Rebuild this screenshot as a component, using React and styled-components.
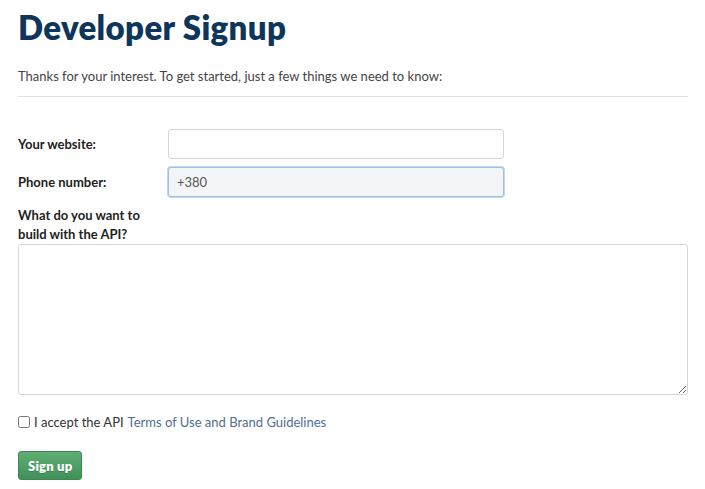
import React from "react";
import styled, { createGlobalStyle } from "styled-components";

const GlobalStyle = createGlobalStyle`
  body {
    margin: 0;
    background: #fff;
    font-family: "Lato", "Open Sans", sans-serif;
    color: #333;
  }
`;

const Page = styled.div`
  padding: 7px 17px 0 18px;
`;

const Title = styled.h1`
  margin: 0;
  font-size: 33px;
  line-height: 40px;
  font-weight: 800;
  color: #0e355c;
  letter-spacing: 0.35px;
`;

const Intro = styled.p`
  margin: 20px 0 0;
  font-size: 13px;
  line-height: 18px;
  color: #444;
`;

const Rule = styled.hr`
  margin: 11px 0 0;
  border: 0;
  border-top: 1px solid #e2e2e2;
`;

const Form = styled.form`
  margin-top: 32px;
  display: flex;
  flex-direction: column;
`;

const Row = styled.div`
  display: grid;
  grid-template-columns: 150px 336px;
  align-items: center;
  margin-bottom: 8px;
`;

const Label = styled.label`
  font-size: 13px;
  font-weight: 700;
  line-height: 19px;
  color: #222;
  width: ${p => p.$width || "auto"};
  margin-top: ${p => p.$top || "0"};
`;

const Input = styled.input`
  box-sizing: border-box;
  height: 30px;
  padding: 0 8px;
  border: 1px solid ${p => (p.$focus ? "#9ec0e6" : "#d6d6d6")};
  border-radius: 3px;
  background: ${p => (p.$focus ? "#f4f5f7" : "#fff")};
  box-shadow: ${p => (p.$focus ? "0 0 0 1px #c4d9f1" : "none")};
  font: 13px "Lato", sans-serif;
  color: #555;
  outline: none;
`;

const TextArea = styled.textarea`
  box-sizing: border-box;
  display: block;
  width: 670px;
  height: 151px;
  margin: 0;
  border: 1px solid #d6d6d6;
  border-radius: 3px;
  font: 13px "Lato", sans-serif;
`;

const Accept = styled.div`
  display: flex;
  align-items: center;
  margin-top: 19px;
  font-size: 13px;
  color: #333;

  input {
    margin: 0 4px 0 0;
    width: 12px;
    height: 12px;
  }

  a {
    color: #4f6e91;
    text-decoration: none;
    margin-left: 4px;
  }
`;

const Button = styled.button`
  align-self: flex-start;
  margin-top: 21px;
  height: 29px;
  padding: 0 9px;
  border: 1px solid #3b8752;
  border-radius: 3px;
  background: linear-gradient(#5eae74, #41905a);
  color: #fff;
  font: 800 13px "Lato", sans-serif;
  letter-spacing: 0.2px;
  text-shadow: 0 1px 0 rgba(0, 0, 0, 0.2);
`;

export default function App() {
  return (
    <Page>
      <GlobalStyle />
      <Title>Developer Signup</Title>
      <Intro>
        Thanks for your interest. To get started, just a few things we need to know:
      </Intro>
      <Rule />
      <Form onSubmit={e => e.preventDefault()}>
        <Row>
          <Label>Your website:</Label>
          <Input type="text" />
        </Row>
        <Row>
          <Label>Phone number:</Label>
          <Input type="text" defaultValue="+380" $focus />
        </Row>
        <Label $width="130px" $top="1px">
          What do you want to build with the API?
        </Label>
        <TextArea />
        <Accept>
          <input type="checkbox" />
          I accept the API
          <a href="#">Terms of Use and Brand Guidelines</a>
        </Accept>
        <Button type="submit">Sign up</Button>
      </Form>
    </Page>
  );
}
